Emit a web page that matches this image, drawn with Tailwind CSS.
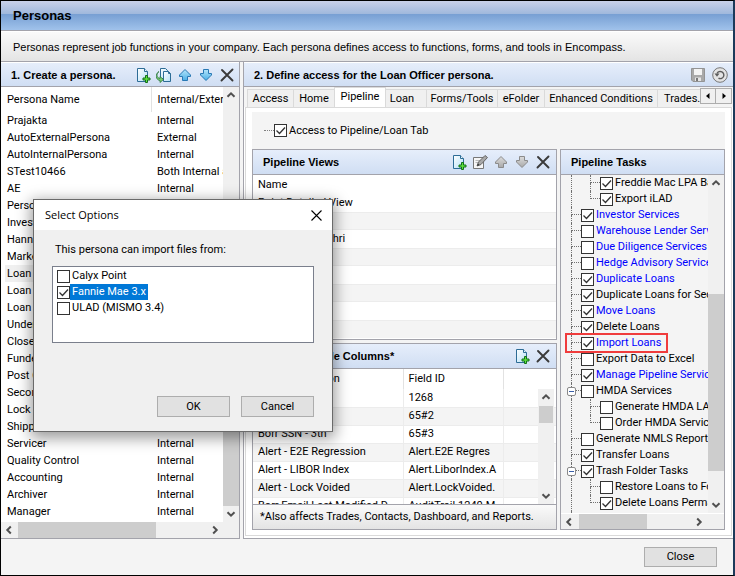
<!DOCTYPE html>
<html lang="en">
  <head>
    <meta charset="UTF-8" />
    <meta name="viewport" content="width=device-width, initial-scale=1.0" />
    <title>Personas</title>
    <script src="https://cdn.jsdelivr.net/npm/@tailwindcss/browser@4"></script>
  </head>
  <body class="relative flex h-screen flex-col overflow-hidden border border-r-2 border-black border-r-[#1c3a5a] bg-white font-['Roboto','Liberation_Sans',sans-serif] text-[11px] leading-4 text-black">
    <!-- Icons -->
    <svg class="absolute size-0" aria-hidden="true">
      <defs>
        <linearGradient id="blue" x2="0" y2="1"><stop stop-color="#b5e6fb" /><stop offset="1" stop-color="#4aaee6" /></linearGradient>
        <linearGradient id="gray" x2="0" y2="1"><stop stop-color="#dcdcdc" /><stop offset="1" stop-color="#a9a9a9" /></linearGradient>
        <linearGradient id="page" x2="1" y2="1"><stop stop-color="#ffffff" /><stop offset="1" stop-color="#b4e0f7" /></linearGradient>
      </defs>
      <symbol id="i-new" viewBox="0 0 16 16">
        <path d="M2.5 1.5h7l3 3v10h-10z" fill="url(#page)" stroke="#2d6c96" />
        <path d="M9.5 1.5v3h3" fill="#e9f6fd" stroke="#2d6c96" />
        <path d="M10.5 8.5h2v2.5h2.5v2h-2.5v2.5h-2v-2.5h-2.5v-2h2.5z" fill="#5ee03c" stroke="#12701a" />
      </symbol>
      <symbol id="i-copy" viewBox="0 0 16 16">
        <path d="M4.5 1.5h5l2 2v8h-7z" fill="url(#page)" stroke="#2d6c96" />
        <path d="M7.5 4.5h5l2 2v8h-7z" fill="url(#page)" stroke="#2d6c96" />
        <path d="M12.5 4.5v2h2" fill="none" stroke="#2d6c96" />
        <path d="M3 4.5C0 6.5 .5 11 4 11.5V9.5l3.5 3-3.5 3v-2C-.5 13-1 7 3 4.5z" fill="#7ccc72" stroke="#2c7a3c" stroke-width=".8" />
      </symbol>
      <symbol id="i-up" viewBox="0 0 16 16">
        <path d="M8 2.5l5.5 5.5v1.5h-3v4h-5v-4h-3V8z" fill="url(#blue)" stroke="#2878b4" stroke-linejoin="round" />
      </symbol>
      <symbol id="i-down" viewBox="0 0 16 16">
        <path d="M8 13.5L2.5 8V6.5h3v-4h5v4h3V8z" fill="url(#blue)" stroke="#2878b4" stroke-linejoin="round" />
      </symbol>
      <symbol id="i-up-off" viewBox="0 0 16 16">
        <path d="M8 2.5l5.5 5.5v1.5h-3v4h-5v-4h-3V8z" fill="url(#gray)" stroke="#8b8b8b" stroke-linejoin="round" />
      </symbol>
      <symbol id="i-down-off" viewBox="0 0 16 16">
        <path d="M8 13.5L2.5 8V6.5h3v-4h5v4h3V8z" fill="url(#gray)" stroke="#8b8b8b" stroke-linejoin="round" />
      </symbol>
      <symbol id="i-x" viewBox="0 0 16 16">
        <path d="M3 3l10.5 10.5M13.5 2.5L2.5 13.5" fill="none" stroke="#3a3a3a" stroke-width="1.9" stroke-linecap="round" />
      </symbol>
      <symbol id="i-edit" viewBox="0 0 16 16">
        <path d="M1.5 3.5h10v11h-10z" fill="#f6f6f6" stroke="#777" />
        <path d="M3.5 6.5h5M3.5 8.5h3" stroke="#bbb" />
        <path d="M5 12l1.5-4L13 1.5l2.5 2L9 10.5z" fill="#a8a8a8" stroke="#666" stroke-linejoin="round" />
        <path d="M5 12l1-2.5 1.5 1.5z" fill="#333" />
      </symbol>
      <symbol id="i-save" viewBox="0 0 16 16">
        <path d="M1.5 1.5h13v13H3l-1.5-1.5z" fill="#a9a9a9" stroke="#949494" />
        <path d="M4 2h8v6H4z" fill="#f3f3f3" />
        <path d="M5 10.5h6V14H5z" fill="#e6e6e6" />
        <path d="M6 11h2v3H6z" fill="#777" />
      </symbol>
      <symbol id="i-reset" viewBox="0 0 16 16">
        <circle cx="8" cy="8" r="7.3" fill="#e4e4e4" stroke="#777" />
        <path d="M5 6.5A3.6 3.6 0 1 1 6.5 11.2" fill="none" stroke="#5c5c5c" stroke-width="1.4" />
        <path d="M2.5 6.5h5L5 9.8z" fill="#5c5c5c" />
      </symbol>
      <symbol id="i-check" viewBox="0 0 13 13">
        <path d="M2.5 6.5l3 3 5.5-6" fill="none" stroke="#333" stroke-width="1.3" />
      </symbol>
      <symbol id="i-chev" viewBox="0 0 16 16">
        <path d="M4.5 9.8L8 6.3l3.5 3.5" fill="none" stroke="#505050" stroke-width="2" />
      </symbol>
    </svg>

    <header class="flex h-[30px] shrink-0 items-center border-b border-[#a3a3ab] bg-linear-to-b from-[#c9d1e9] from-0% via-[#9fb8dc] via-45% to-[#a5c5ec]">
      <h1 class="flex h-full w-full items-center bg-linear-to-b from-transparent from-45% via-[#779fd3] via-45% to-[#a0c2eb] pl-3 font-['Liberation_Sans',sans-serif] text-[13px] font-bold">Personas</h1>
    </header>
    <p class="flex h-[31px] shrink-0 items-center border-t border-b border-t-white border-b-[#a3a3ab] bg-linear-to-b from-[#fafafa] to-[#e4e4e4] pl-3 font-['Liberation_Sans',sans-serif] whitespace-nowrap">
      Personas represent job functions in your company. Each persona defines access to functions, forms, and tools in Encompass.
    </p>

    <main class="flex min-h-0 flex-1 gap-[3px] bg-[#f4f4f4]">
      <!-- 1. Personas -->
      <section class="flex w-[239px] shrink-0 flex-col border-r border-b border-[#a3a3ab] bg-white">
        <div class="flex h-[25px] shrink-0 items-center border-t border-b border-t-white border-b-[#a3a3ab] bg-linear-to-b from-[#e6eefb] to-[#d0def3] pr-1 pl-2.5">
          <h2 class="flex-1 font-['Liberation_Sans',sans-serif] font-bold">1. Create a persona.</h2>
          <div class="flex gap-[5px]">
            <button aria-label="New"><svg class="size-4"><use href="#i-new" /></svg></button>
            <button aria-label="Duplicate"><svg class="size-4"><use href="#i-copy" /></svg></button>
            <button aria-label="Move up"><svg class="size-4"><use href="#i-up" /></svg></button>
            <button aria-label="Move down"><svg class="size-4"><use href="#i-down" /></svg></button>
            <button aria-label="Delete"><svg class="size-4"><use href="#i-x" /></svg></button>
          </div>
        </div>
        <div class="flex min-h-0 flex-1">
          <div class="min-w-0 flex-1 overflow-hidden pl-1">
            <table class="w-full table-fixed text-left whitespace-nowrap">
              <thead>
                <tr class="h-[25px]">
                  <th class="w-[146px] border-r border-[#e2e2e2] pl-0.5 font-normal">Persona Name</th>
                  <th class="overflow-hidden pl-1.5 font-normal">Internal/External</th>
                </tr>
              </thead>
              <tbody id="personas"></tbody>
            </table>
          </div>
          <div class="flex w-4 flex-col bg-[#f0f0f0]">
            <svg class="size-4"><use href="#i-chev" /></svg>
            <div class="mt-24 flex-1 bg-[#cdcdcd]"></div>
            <svg class="size-4 rotate-180"><use href="#i-chev" /></svg>
          </div>
        </div>
        <div class="flex h-4 shrink-0 bg-[#f0f0f0]">
          <svg class="size-4 -rotate-90"><use href="#i-chev" /></svg>
          <div class="ml-px w-[138px] bg-[#cdcdcd]"></div>
          <svg class="ml-auto mr-4 size-4 rotate-90"><use href="#i-chev" /></svg>
        </div>
      </section>

      <!-- 2. Access -->
      <section class="flex min-w-0 flex-1 flex-col border-b border-l border-[#a3a3ab] bg-white">
        <div class="flex h-[25px] shrink-0 items-center border-t border-b border-t-white border-b-[#a3a3ab] bg-linear-to-b from-[#e6eefb] to-[#d0def3] pr-[5px] pl-2.5">
          <h2 class="flex-1 font-['Liberation_Sans',sans-serif] font-bold">2. Define access for the Loan Officer persona.</h2>
          <div class="flex gap-1.5">
            <button aria-label="Save"><svg class="size-4"><use href="#i-save" /></svg></button>
            <button aria-label="Reset"><svg class="size-4"><use href="#i-reset" /></svg></button>
          </div>
        </div>

        <div class="flex h-5 shrink-0 items-end bg-[#f4f4f4] pr-px pl-[3px]" role="tablist">
          <button role="tab" class="h-[18px] w-[46px] border-t border-l border-[#dadada] bg-[#f0f0f0]">Access</button>
          <button role="tab" class="h-[18px] w-[41px] border-t border-l border-[#dadada] bg-[#f0f0f0]">Home</button>
          <button role="tab" aria-selected="true" class="h-5 w-[52px] border-x border-t border-[#dadada] bg-white pb-0.5">Pipeline</button>
          <button role="tab" class="h-[18px] w-10 border-t border-[#dadada] bg-[#f0f0f0] pr-2">Loan</button>
          <button role="tab" class="h-[18px] w-[71px] border-t border-l border-[#dadada] bg-[#f0f0f0]">Forms/Tools</button>
          <button role="tab" class="h-[18px] w-[47px] border-t border-l border-[#dadada] bg-[#f0f0f0]">eFolder</button>
          <button role="tab" class="h-[18px] w-[113px] border-t border-l border-[#dadada] bg-[#f0f0f0]">Enhanced Conditions</button>
          <button role="tab" class="h-[18px] min-w-0 flex-1 overflow-hidden border-t border-l border-[#dadada] bg-[#f0f0f0] pl-1.5 text-left whitespace-nowrap">Trades.</button>
          <div class="mb-[3px] flex h-4 shrink-0">
            <button aria-label="Scroll tabs left" class="flex w-4 items-center justify-center border border-[#adadad] bg-[#f0f0f0]"><svg class="size-1.5" viewBox="0 0 6 6"><path d="M4.5 0v6L1 3z" /></svg></button>
            <button aria-label="Scroll tabs right" class="flex w-4 items-center justify-center border border-l-0 border-[#adadad] bg-[#f0f0f0]"><svg class="size-1.5" viewBox="0 0 6 6"><path d="M1.5 0v6L5 3z" /></svg></button>
          </div>
        </div>

        <div class="mr-px mb-0.5 ml-px flex min-h-0 flex-1 flex-col border border-[#dadada] bg-white px-1.5 pt-1 pb-[5px]">
          <div class="flex min-h-0 flex-1 flex-col bg-[#f4f4f4]">
            <label class="flex h-[37px] shrink-0 items-center gap-0.5 pl-3">
              <span class="-mr-0.5 w-2.5 border-t border-dotted border-[#808080]"></span>
              <span class="relative size-[13px]"><input type="checkbox" checked class="peer block size-[13px] appearance-none border border-[#333] bg-white" /><svg class="pointer-events-none absolute inset-0 hidden size-[13px] peer-checked:block"><use href="#i-check" /></svg></span>
              Access to Pipeline/Loan Tab
            </label>

            <div class="flex min-h-0 flex-1 gap-[3px]">
              <div class="flex min-w-0 flex-1 flex-col gap-[3px]">
                <!-- Pipeline Views -->
                <section class="flex h-[191px] shrink-0 flex-col border border-[#a3a3ab] bg-white">
                  <div class="flex h-[25px] shrink-0 items-center border-b border-[#a3a3ab] bg-linear-to-b from-[#e6eefb] to-[#d0def3] pr-[5px] pl-2.5">
                    <h3 class="flex-1 font-['Liberation_Sans',sans-serif] font-bold">Pipeline Views</h3>
                    <div class="flex gap-[5px]">
                      <button aria-label="New view"><svg class="size-4"><use href="#i-new" /></svg></button>
                      <button aria-label="Edit view"><svg class="size-4"><use href="#i-edit" /></svg></button>
                      <button aria-label="Move view up"><svg class="size-4"><use href="#i-up-off" /></svg></button>
                      <button aria-label="Move view down"><svg class="size-4"><use href="#i-down-off" /></svg></button>
                      <button aria-label="Delete view"><svg class="size-4"><use href="#i-x" /></svg></button>
                    </div>
                  </div>
                  <div class="flex h-[19px] shrink-0 items-center pl-[5px]">Name</div>
                  <ul class="overflow-hidden">
                    <li class="flex h-[18px] items-center pl-[5px]">Point Detailed View</li>
                    <li class="h-[18px] border-y border-[#ececec] bg-[#f4f4f4]"></li>
                    <li class="flex h-[18px] items-center pl-[5px]">Pipeline View Shri</li>
                    <li class="h-[18px] border-y border-[#ececec] bg-[#f4f4f4]"></li>
                    <li class="h-[18px]"></li>
                    <li class="h-[18px] border-y border-[#ececec] bg-[#f4f4f4]"></li>
                    <li class="h-[18px]"></li>
                    <li class="h-[18px] border-t border-[#ececec] bg-[#f4f4f4]"></li>
                  </ul>
                </section>

                <!-- Available Columns -->
                <section class="flex min-h-0 flex-1 flex-col border border-[#a3a3ab] bg-white">
                  <div class="flex h-[25px] shrink-0 items-center border-b border-[#a3a3ab] bg-linear-to-b from-[#e6eefb] to-[#d0def3] pr-[5px] pl-2.5">
                    <h3 class="flex-1 font-['Liberation_Sans',sans-serif] font-bold">Loan Available Columns*</h3>
                    <div class="flex gap-[5px]">
                      <button aria-label="Add column"><svg class="size-4"><use href="#i-new" /></svg></button>
                      <button aria-label="Remove column"><svg class="size-4"><use href="#i-x" /></svg></button>
                    </div>
                  </div>
                  <div class="relative min-h-0 flex-1 overflow-hidden">
                    <table class="w-full table-fixed text-left whitespace-nowrap">
                      <thead>
                        <tr class="h-5">
                          <th class="w-[150px] border-r border-[#e2e2e2] pl-[5px] font-normal">Field Description</th>
                          <th class="w-[100px] border-r border-[#e2e2e2] pl-[5px] font-normal">Field ID</th>
                          <th></th>
                        </tr>
                      </thead>
                      <tbody id="columns"></tbody>
                    </table>
                    <div class="absolute top-5 right-0.5 bottom-0 flex w-4 flex-col bg-[#f0f0f0]">
                      <svg class="size-4"><use href="#i-chev" /></svg>
                      <div class="mx-px mt-px h-[17px] bg-[#cdcdcd]"></div>
                      <svg class="mt-auto size-4 rotate-180"><use href="#i-chev" /></svg>
                    </div>
                  </div>
                  <p class="flex h-[25px] shrink-0 items-center border-t border-[#a3a3ab] bg-linear-to-b from-[#fafafa] to-[#e4e4e4] pl-[7px] whitespace-nowrap">*Also affects Trades, Contacts, Dashboard, and Reports.</p>
                </section>
              </div>

              <!-- Pipeline Tasks -->
              <section class="flex w-[165px] shrink-0 flex-col border border-[#a3a3ab] bg-[#f4f4f4]">
                <div class="flex h-[25px] shrink-0 items-center border-b border-[#a3a3ab] bg-linear-to-b from-[#e6eefb] to-[#d0def3] pl-2.5">
                  <h3 class="font-['Liberation_Sans',sans-serif] font-bold">Pipeline Tasks</h3>
                </div>
                <div class="flex min-h-0 flex-1">
                  <ul id="tasks" class="min-w-0 flex-1 overflow-hidden pl-2.5 whitespace-nowrap"></ul>
                  <div class="flex w-4 shrink-0 flex-col bg-[#f0f0f0]">
                    <svg class="size-4"><use href="#i-chev" /></svg>
                    <div class="mt-[103px] h-[177px] bg-[#cdcdcd]"></div>
                    <svg class="mt-auto size-4 rotate-180"><use href="#i-chev" /></svg>
                  </div>
                </div>
                <div class="flex h-4 shrink-0 border-t border-white bg-[#f0f0f0]">
                  <svg class="size-4 -rotate-90"><use href="#i-chev" /></svg>
                  <div class="ml-0.5 w-[68px] bg-[#cdcdcd]"></div>
                  <svg class="mr-[17px] ml-auto size-4 rotate-90"><use href="#i-chev" /></svg>
                </div>
              </section>
            </div>
          </div>
        </div>
      </section>
    </main>

    <footer class="flex h-9 shrink-0 items-center justify-end bg-[#f4f4f4] pr-4">
      <button class="h-5 w-[73px] border border-[#adadad] bg-[#e1e1e1]">Close</button>
    </footer>

    <!-- Select Options dialog -->
    <div role="dialog" aria-labelledby="dialog-title" class="absolute top-[198px] left-8 flex h-[233px] w-[300px] flex-col border border-[#6a6a6a] bg-[#f0f0f0] shadow-[0_4px_14px_2px_rgba(0,0,0,0.4)]">
      <div class="flex h-[30px] shrink-0 items-center justify-between bg-white pr-2.5 pl-[11px]">
        <h2 id="dialog-title" class="font-['Open_Sans',sans-serif]">Select Options</h2>
        <button aria-label="Close dialog"><svg class="size-[11px]" viewBox="0 0 11 11"><path d="M.5 .5l10 10M10.5 .5l-10 10" fill="none" stroke="#000" stroke-width="1.1" /></svg></button>
      </div>
      <div class="flex flex-1 flex-col px-[18px] pt-3 pb-3.5">
        <p class="pl-[3px]">This persona can import files from:</p>
        <div class="mt-2 flex h-[77px] flex-col border border-[#7a7f8c] bg-white pt-px pl-1">
          <label class="flex h-4 items-center gap-px">
            <span class="relative size-[13px]"><input type="checkbox" class="peer block size-[13px] appearance-none border border-[#333] bg-white" /><svg class="pointer-events-none absolute inset-0 hidden size-[13px] peer-checked:block"><use href="#i-check" /></svg></span>
            <span class="px-px">Calyx Point</span>
          </label>
          <label class="flex h-4 items-center">
            <span class="relative size-[13px]"><input type="checkbox" checked class="peer block size-[13px] appearance-none border border-[#333] bg-white" /><svg class="pointer-events-none absolute inset-0 hidden size-[13px] peer-checked:block"><use href="#i-check" /></svg></span>
            <span class="bg-[#0078d7] px-0.5 text-white">Fannie Mae 3.x</span>
          </label>
          <label class="flex h-4 items-center gap-px">
            <span class="relative size-[13px]"><input type="checkbox" class="peer block size-[13px] appearance-none border border-[#333] bg-white" /><svg class="pointer-events-none absolute inset-0 hidden size-[13px] peer-checked:block"><use href="#i-check" /></svg></span>
            <span class="px-px">ULAD (MISMO 3.4)</span>
          </label>
        </div>
        <div class="mt-auto flex justify-end gap-[11px]">
          <button class="h-[21px] w-[73px] border border-[#adadad] bg-[#e1e1e1]">OK</button>
          <button class="h-[21px] w-[73px] border border-[#adadad] bg-[#e1e1e1]">Cancel</button>
        </div>
      </div>
    </div>

    <!-- Highlight around Import Loans -->
    <div class="pointer-events-none absolute top-[332px] left-[564px] h-5 w-[103px] border-2 border-[#f03c3c]"></div>

    <script>
      const personas = [
        ["Prajakta", "Internal"],
        ["AutoExternalPersona", "External"],
        ["AutoInternalPersona", "Internal"],
        ["STest10466", "Both Internal and External"],
        ["AE", "Internal"],
        ["Persona", "Internal"],
        ["Investor", "Internal"],
        ["Hanna", "Internal"],
        ["Marketing", "Internal"],
        ["Loan Officer", "Internal"],
        ["Loan Opener", "Internal"],
        ["Loan Processor", "Internal"],
        ["Underwriter", "Internal"],
        ["Closer", "Internal"],
        ["Funder", "Internal"],
        ["Post Closer", "Internal"],
        ["Secondary", "Internal"],
        ["Lock Desk", "Internal"],
        ["Shipper", "Internal"],
        ["Servicer", "Internal"],
        ["Quality Control", "Internal"],
        ["Accounting", "Internal"],
        ["Archiver", "Internal"],
        ["Manager", "Internal"],
      ];
      document.getElementById("personas").innerHTML = personas
        .map(
          ([name, type]) => `
            <tr class="h-[17px] ${name === "Loan Officer" ? "bg-[#f0f0f0]" : ""}">
              <td class="pl-0.5">${name}</td>
              <td class="overflow-hidden pl-1.5">${type}</td>
            </tr>`
        )
        .join("");

      const columns = [
        ["Borr Age", "1268"],
        ["Borr SSN - 2nd", "65#2"],
        ["Borr SSN - 3th", "65#3"],
        ["Alert - E2E Regression", "Alert.E2E Regres"],
        ["Alert - LIBOR Index", "Alert.LiborIndex.A"],
        ["Alert - Lock Voided", "Alert.LockVoided."],
        ["Borr Email Last Modified D", "AuditTrail.1240.M"],
      ];
      document.getElementById("columns").innerHTML = columns
        .map(
          ([name, id], i) => `
            <tr class="h-[18px] ${i % 2 ? "bg-[#f4f4f4]" : ""}">
              <td class="overflow-hidden border-r border-b border-[#ececec] pl-[5px]">${name}</td>
              <td class="overflow-hidden border-r border-b border-[#ececec] pl-[5px]">${id}</td>
              <td class="border-b border-[#ececec]"></td>
            </tr>`
        )
        .join("");

      // level, label, checked, blue, last child, expandable
      const tasks = [
        [2, "Freddie Mac LPA Batch", 1, 0, 0, 0],
        [2, "Export iLAD", 1, 0, 1, 0],
        [1, "Investor Services", 1, 1, 0, 0],
        [1, "Warehouse Lender Services", 0, 1, 0, 0],
        [1, "Due Diligence Services", 0, 1, 0, 0],
        [1, "Hedge Advisory Services", 0, 1, 0, 0],
        [1, "Duplicate Loans", 1, 1, 0, 0],
        [1, "Duplicate Loans for Second", 1, 0, 0, 0],
        [1, "Move Loans", 1, 1, 0, 0],
        [1, "Delete Loans", 1, 0, 0, 0],
        [1, "Import Loans", 1, 1, 0, 0],
        [1, "Export Data to Excel", 0, 0, 0, 0],
        [1, "Manage Pipeline Services", 1, 1, 0, 0],
        [1, "HMDA Services", 0, 0, 0, 1],
        [2, "Generate HMDA LAR", 0, 0, 0, 0],
        [2, "Order HMDA Services", 0, 0, 1, 0],
        [1, "Generate NMLS Report", 0, 0, 0, 0],
        [1, "Transfer Loans", 1, 0, 0, 0],
        [1, "Trash Folder Tasks", 1, 0, 0, 1],
        [2, "Restore Loans to Folder", 0, 0, 0, 0],
        [2, "Delete Loans Permanently", 1, 0, 1, 0],
        [1, "", 0, 0, 0, 0],
      ];
      const expander = `<span class="absolute top-1 -left-1 flex size-[9px] items-center justify-center rounded-xs border border-[#8a8a8a] bg-white"><span class="h-px w-[5px] bg-[#3a5fa8]"></span></span>`;
      const branch = (last, open) => `
        <span class="relative flex h-4 w-2.5 shrink-0 flex-col">
          <span class="h-2 border-b border-l border-dotted border-[#707070]"></span>
          <span class="h-2 ${last ? "" : "border-l border-dotted border-[#707070]"}"></span>
          ${open ? expander : ""}
        </span>`;
      document.getElementById("tasks").innerHTML = tasks
        .map(
          ([level, label, checked, blue, last, open]) => `
            <li>
              <label class="flex h-4 items-center">
                ${level === 2 ? `<span class="h-4 w-[19px] shrink-0 border-l border-dotted border-[#707070]"></span>` : ""}
                ${branch(last, open)}
                <span class="relative size-[13px] shrink-0"><input type="checkbox" ${checked ? "checked" : ""} class="peer block size-[13px] appearance-none border border-[#333] bg-white" /><svg class="pointer-events-none absolute inset-0 hidden size-[13px] peer-checked:block"><use href="#i-check" /></svg></span>
                <span class="pl-0.5 ${blue ? "text-[#0000ff]" : ""}">${label}</span>
              </label>
            </li>`
        )
        .join("");
    </script>
  </body>
</html>
